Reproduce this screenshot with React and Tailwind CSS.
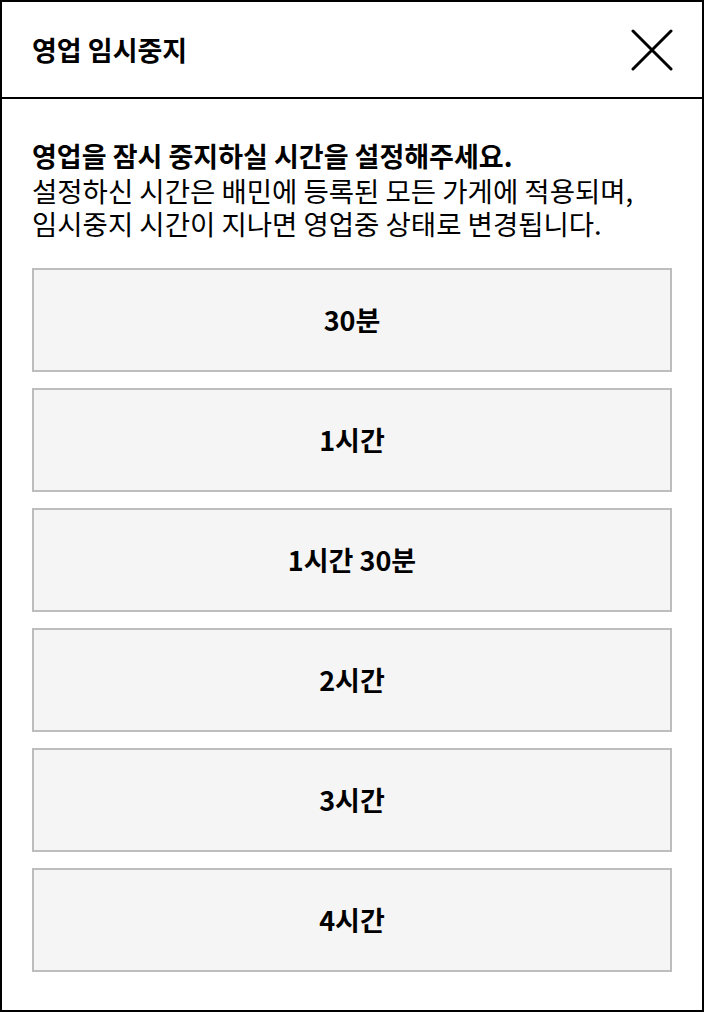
import React from "react";

const OPTIONS = ["30분", "1시간", "1시간 30분", "2시간", "3시간", "4시간"];

function CloseIcon() {
  return (
    <svg width="42" height="42" viewBox="0 0 42 42" fill="none" aria-hidden="true">
      <path d="M2 2L40 40M40 2L2 40" stroke="#000" strokeWidth="3" strokeLinecap="round" />
    </svg>
  );
}

export default function App() {
  return (
    <div
      className="flex h-[1012px] w-[704px] flex-col border-2 border-black bg-white text-black"
      style={{ fontFamily: '"Noto Sans CJK KR", "Noto Sans", sans-serif' }}
    >
      {/* Header */}
      <div className="flex h-[97px] shrink-0 items-center justify-between border-b-2 border-black pl-[30px] pr-[29px]">
        <h1 className="text-[27px] font-bold leading-none">영업 임시중지</h1>
        <button type="button" aria-label="닫기" className="flex items-center justify-center">
          <CloseIcon />
        </button>
      </div>

      {/* Body */}
      <div className="flex flex-col px-[30px] pt-[38px]">
        <p className="text-[27px] font-bold leading-[37px]">영업을 잠시 중지하실 시간을 설정해주세요.</p>
        <p className="text-[27.5px] leading-[33px]">
          설정하신 시간은 배민에 등록된 모든 가게에 적용되며,
          <br />
          임시중지 시간이 지나면 영업중 상태로 변경됩니다.
        </p>

        <div className="mt-[28px] flex flex-col gap-[16px]">
          {OPTIONS.map((label) => (
            <button
              key={label}
              type="button"
              className="flex h-[104px] items-center justify-center border-2 border-[#bdbdbd] bg-[#f5f5f5] text-[27px] font-bold"
            >
              {label}
            </button>
          ))}
        </div>
      </div>
    </div>
  );
}
